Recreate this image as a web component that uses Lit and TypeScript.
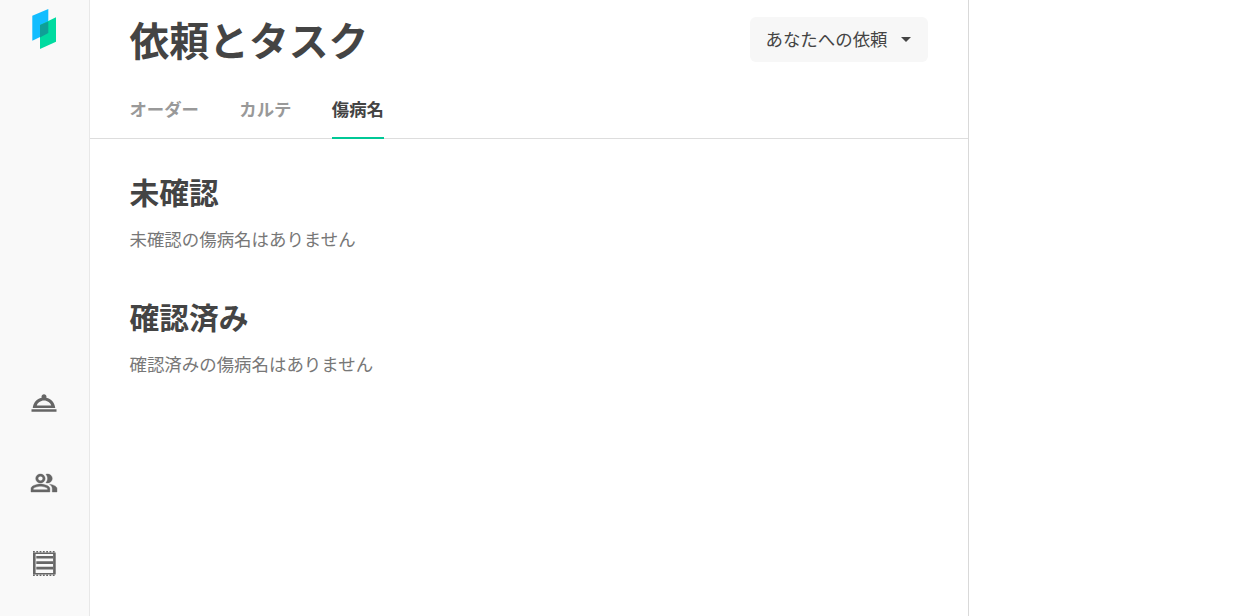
import { LitElement, html, css } from "lit";
import { customElement } from "lit/decorators.js";

@customElement("app-root")
export class AppRoot extends LitElement {
  static styles = css`
    :host {
      display: block;
      width: 1245px;
      height: 616px;
      overflow: hidden;
      background: #fff;
      font-family: "Noto Sans CJK JP", "Noto Sans", sans-serif;
      color: #444;
    }
    .app { display: flex; height: 616px; }
    .rail {
      width: 89px;
      flex: none;
      background: #f9f9f9;
      border-right: 1px solid #e8e8e8;
      display: flex;
      flex-direction: column;
      align-items: center;
    }
    .logo { margin: 8px 0 0 -1px; display: block; width: 26px; height: 42px; }
    .nav { margin-top: auto; margin-left: -1px; display: flex; flex-direction: column; gap: 50px; padding-bottom: 38px; }
    .nav svg { display: block; width: 30px; height: 30px; fill: #666; }
    .people { stroke: #666; stroke-width: 0.35; }
    .perf { stroke: #666; stroke-width: 1.5; stroke-dasharray: 1.8 1.5; fill: none; }
    .main { width: 878px; flex: none; border-right: 1px solid #d9d9d9; display: flex; flex-direction: column; }
    .head { display: flex; justify-content: space-between; align-items: flex-start; padding: 17px 40px 0 39.5px; height: 56px; }
    h1 { margin: -6px 0 0; font-size: 39.8px; line-height: 56px; font-weight: 700; color: #444; }
    .picker {
      display: flex; align-items: center; gap: 13.5px;
      height: 45px; width: 178px; box-sizing: border-box; padding: 0 16px 2px 15.5px;
      background: #f7f7f7; border-radius: 6px;
      font-size: 17.45px; color: #444;
    }
    .caret { width: 0; height: 0; margin-top: 2px; border-left: 5.500px solid transparent; border-right: 5.500px solid transparent; border-top: 5.500px solid #444; }
    .tabs { display: flex; gap: 40.3px; padding: 0 39.4px; margin-top: 10px; border-bottom: 1px solid #ddd; height: 55px; }
    .tab { font-size: 17.4px; font-weight: 700; color: #999; line-height: 24px; padding-top: 14px; box-sizing: border-box; height: 56px; }
    .tab.on { color: #444; border-bottom: 2px solid #00c896; }
    .body { padding: 31px 39.5px 0; }
    h2 { margin: 0; font-size: 29.75px; line-height: 42px; font-weight: 700; color: #444; }
    p { margin: 14px 0 0; font-size: 17.47px; line-height: 26px; color: #777; }
    section + section { margin-top: 43px; }
  `;

  render() {
    return html`
      <div class="app">
        <aside class="rail">
          <svg class="logo" viewBox="31 8 26 42">
            <path d="M32.300 15.700 L48.300 9 L48.300 33 L32.300 40.700 Z" fill="#12bdff"/>
            <path d="M40 25 L56 17.300 L56 41.700 L40 49 Z" fill="#00dba0"/>
            <path d="M40 25 L48.300 21.500 L48.300 33 L40 37.500 Z" fill="#0f9f97"/>
          </svg>
          <div class="nav">
            <svg viewBox="0 0 24 24"><path d="M18.980 17H2v2h20v-2zM21 16c-.27-4.070-3.250-7.400-7.160-8.210.1-.24.16-.51.16-.79 0-1.100-.9-2-2-2s-2 .9-2 2c0 .28.06.55.16.79C6.250 8.600 3.270 11.930 3 16h18zm-9-6.010c2.760 0 5.150 1.910 5.790 4H6.210c.64-2.090 3.030-4 5.790-4z"/></svg>
            <svg viewBox="-0.69 -1.34 25.4 26.7" preserveAspectRatio="none"><path class="people" d="M16.670 13.130C18.040 14.060 19 15.320 19 17v3h4v-3c0-2.180-3.570-3.470-6.330-3.870zM15 12c2.210 0 4-1.790 4-4s-1.790-4-4-4c-.47 0-.91.1-1.330.24C14.500 5.270 15 6.580 15 8s-.5 2.730-1.330 3.760c.42.14.86.24 1.330.24zM9 12c2.210 0 4-1.790 4-4s-1.790-4-4-4-4 1.790-4 4 1.790 4 4 4zm0-6c1.100 0 2 .9 2 2s-.9 2-2 2-2-.9-2-2 .9-2 2-2zM9 13c-2.670 0-8 1.340-8 4v3h16v-3c0-2.660-5.330-4-8-4zm6 5H3v-.99C3.200 16.290 6.300 15 9 15s5.800 1.290 6 2z"/></svg>
            <svg viewBox="0 0 30 30">
              <path fill-rule="evenodd" d="M4 4.500h22.700v22H4zM6.600 6.100v18.800h17.500V6.100z"/>
              <path class="perf" d="M4 3.750h22.700M4 27.250h22.700"/>
              <path d="M7.300 8h16.700v2.600H7.300zM7.300 13.300h16.700v2.600H7.300zM7.300 18.800h16.700v2.600H7.300z"/>
            </svg>
          </div>
        </aside>
        <main class="main">
          <div class="head">
            <h1>依頼とタスク</h1>
            <div class="picker"><span>あなたへの依頼</span><span class="caret"></span></div>
          </div>
          <div class="tabs">
            <div class="tab">オーダー</div>
            <div class="tab">カルテ</div>
            <div class="tab on">傷病名</div>
          </div>
          <div class="body">
            <section><h2>未確認</h2><p>未確認の傷病名はありません</p></section>
            <section><h2>確認済み</h2><p>確認済みの傷病名はありません</p></section>
          </div>
        </main>
      </div>
    `;
  }
}
